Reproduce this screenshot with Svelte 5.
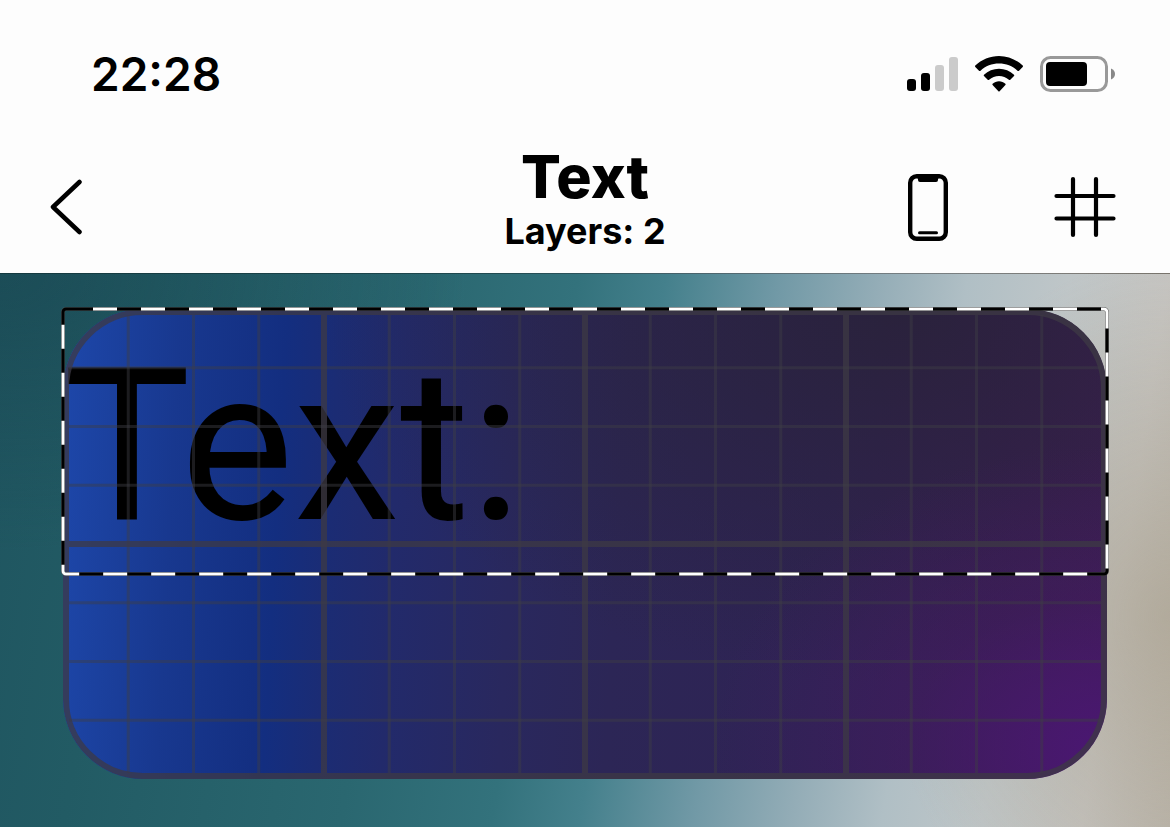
<script>
    let title = 'Text';
    let layers = 2;
    let content = 'Text:';

    // The card is split in 16 columns and 8 rows, every fourth line is thicker
    const cardWidth = 1044;
    const cardHeight = 470;
    const columns = Array.from({ length: 15 }, (_, i) => i + 1);
    const rows = Array.from({ length: 7 }, (_, i) => i + 1);

    let showGrid = true;

    function toggleGrid() {
        showGrid = !showGrid;
    }
</script>

<div class="screen">
    <header>
        <div class="status-bar">
            <time>22:28</time>
            <div class="status-icons">
                <svg width="51" height="34" viewBox="0 0 51 34" aria-hidden="true">
                    <rect x="0" y="22" width="9" height="12" rx="3" />
                    <rect x="14" y="16" width="9" height="18" rx="3" />
                    <rect x="28" y="8" width="9" height="26" rx="3" fill="#cbcbcb" />
                    <rect x="42" y="0" width="9" height="34" rx="3" fill="#cbcbcb" />
                </svg>
                <svg class="wifi" width="48" height="36" viewBox="0 0 48 36" aria-hidden="true">
                    <path d="M24 0C33 0 41.500 3.700 47.700 9.600Q48.300 10.300 47.700 11L44 14.700Q43.300 15.300 42.500 14.700C37.500 10 31 7.500 24 7.500S10.500 10 5.500 14.700Q4.700 15.300 4 14.700L.3 11Q-.3 10.300.3 9.600C6.500 3.700 15 0 24 0Z" />
                    <path d="M24 12.700C29.700 12.700 35 15 39 18.700Q39.700 19.400 39 20.100L35.300 23.800Q34.600 24.400 33.900 23.800C31.200 21.400 27.700 20 24 20S16.800 21.400 14.100 23.800Q13.400 24.400 12.700 23.800L9 20.100Q8.300 19.400 9 18.700C13 15 18.300 12.700 24 12.700Z" />
                    <path d="M24 25.300C26.400 25.300 28.600 26.200 30.400 27.700Q31 28.400 30.400 29.100L24.600 35.200Q24 35.700 23.400 35.200L17.600 29.100Q17 28.400 17.600 27.700C19.400 26.200 21.600 25.300 24 25.300Z" />
                </svg>
                <svg width="75" height="36" viewBox="0 0 75 36" aria-hidden="true">
                    <rect x="1.500" y="1.500" width="65" height="33" rx="9" fill="none" stroke="#999" stroke-width="3" />
                    <rect x="6" y="6" width="41" height="24" rx="4" />
                    <path d="M71 12.500C73.700 13.600 75 15.600 75 18S73.700 22.400 71 23.500Z" fill="#888" />
                </svg>
            </div>
        </div>

        <nav>
            <button class="back" type="button" aria-label="Back">
                <svg width="32" height="56" viewBox="0 0 32 56" aria-hidden="true">
                    <path d="M29.500 3L3 28L29.500 53" fill="none" stroke="#000" stroke-width="4.500" stroke-linecap="round" stroke-linejoin="round" />
                </svg>
            </button>
            <div class="heading">
                <h1>{title}</h1>
                <p>Layers: {layers}</p>
            </div>
            <div class="actions">
                <button type="button" aria-label="Device">
                    <svg width="40" height="67" viewBox="0 0 40 67" aria-hidden="true">
                        <rect x="2.200" y="2.200" width="35.600" height="62.600" rx="6.500" fill="none" stroke="#000" stroke-width="4.400" />
                        <path d="M8 3H32C30 4 30 5 30 6Q30 8 28 8H12Q10 8 10 6C10 5 10 4 8 3Z" />
                        <path d="M11.500 58.800H28.500" stroke="#000" stroke-width="3" stroke-linecap="round" />
                    </svg>
                </button>
                <button type="button" aria-label="Grid" onclick={toggleGrid}>
                    <svg width="62" height="62" viewBox="0 0 62 62" aria-hidden="true">
                        <path d="M19 3V59M42 3V59M2.500 20H59.500M2.500 42.500H59.500" fill="none" stroke="#000" stroke-width="4.200" stroke-linecap="round" />
                    </svg>
                </button>
            </div>
        </nav>
    </header>

    <main>
        <div class="widget">
            <div class="card">
                <p class="layer-text">{content}</p>
                {#if showGrid}
                    <svg class="grid" viewBox="0 0 {cardWidth} {cardHeight}" preserveAspectRatio="none" aria-hidden="true">
                        {#each columns as c}
                            <line x1={c * cardWidth / 16} x2={c * cardWidth / 16} y1="6" y2={cardHeight - 6} class:major={c % 4 === 0} />
                        {/each}
                        {#each rows as r}
                            <line y1={r * cardHeight / 8} y2={r * cardHeight / 8} x1="6" x2={cardWidth - 6} class:major={r % 4 === 0} />
                        {/each}
                    </svg>
                {/if}
            </div>
            <!-- Selection frame of the active layer -->
            <svg class="selection" viewBox="0 0 1044 265" preserveAspectRatio="none" aria-hidden="true">
                <path class="halo" d="M6 0H1041a3 3 0 0 1 3 3V262a3 3 0 0 1-3 3H3a3 3 0 0 1-3-3V3a3 3 0 0 1 3-3H6" />
                <path class="dark" d="M6 0H1041a3 3 0 0 1 3 3V262a3 3 0 0 1-3 3H3a3 3 0 0 1-3-3V3a3 3 0 0 1 3-3H6" />
                <path class="dashes" d="M6 0H1041a3 3 0 0 1 3 3V262a3 3 0 0 1-3 3H3a3 3 0 0 1-3-3V3a3 3 0 0 1 3-3H5" />
            </svg>
        </div>
    </main>
</div>

<style>
    :global(body) {
        margin: 0;
        background: #fdfdfd;
    }

    .screen {
        min-height: 100vh;
        display: flex;
        flex-direction: column;
        font-family: Inter, "Liberation Sans", sans-serif;
        color: #000;
    }

    header {
        background: #fdfdfd;
    }

    .status-bar {
        display: flex;
        justify-content: space-between;
        align-items: center;
        height: 148px;
        padding: 0 55px 0 91px;
    }

    time {
        font-size: 46px;
        font-weight: 600;
        line-height: 56px;
    }

    .status-icons {
        display: flex;
        align-items: center;
        gap: 17px;
    }

    nav {
        display: grid;
        grid-template-columns: 1fr auto 1fr;
        align-items: center;
        height: 118px;
        padding: 0 54px 7px;
    }

    button {
        display: flex;
        padding: 0;
        border: none;
        background: none;
        cursor: pointer;
    }

    .back {
        justify-self: start;
        margin-left: -4px;
    }

    .heading {
        text-align: center;
        margin: -8px 0 8px;
    }

    h1 {
        margin: 0;
        font-size: 59px;
        font-weight: 800;
        line-height: 64px;
    }

    .heading p {
        margin: 0;
        font-size: 36px;
        font-weight: 700;
        line-height: 44px;
    }

    .actions {
        display: flex;
        align-items: center;
        justify-self: end;
        gap: 106px;
    }

    main {
        flex: 1;
        padding: 35px 63px 48px;
        border-top: 1px solid rgba(0, 0, 0, 0.35);
        background:
            radial-gradient(ellipse 25% 65% at 100% 62%, rgba(168, 158, 138, 0.6), rgba(175, 168, 155, 0)),
            radial-gradient(ellipse 40% 50% at 0% 0%, rgba(24, 68, 78, 0.5), rgba(24, 68, 78, 0)),
            linear-gradient(99deg, #1f5560 0%, #225b64 12%, #2a6770 34%, #33727c 46%, #44808c 53%, #7199a6 62%, #94adb7 70%, #b0bfc5 77%, #bfc6c8 85%, #c6c5c2 93%, #bdb8af 100%);
    }

    .widget {
        position: relative;
    }

    .card {
        position: relative;
        aspect-ratio: 1044 / 470;
        overflow: hidden;
        border-radius: 80px;
        background:
            radial-gradient(ellipse 38% 65% at 100% 94%, rgba(76, 22, 118, 0.9), rgba(72, 24, 104, 0.38) 50%, rgba(64, 28, 90, 0)),
            radial-gradient(ellipse 55% 80% at 80% 0%, rgba(40, 34, 54, 0.8), rgba(42, 34, 62, 0)),
            linear-gradient(93deg, #1d46a8 1%, #18388f 11%, #132e80 21%, #1b2c74 26%, #222a6b 32%, #29285e 43%, #2c2656 53%, #2f2354 72%, #381f52 91%, #3d1e54 100%);
    }

    .card::after {
        content: '';
        position: absolute;
        inset: 0;
        border: 6px solid rgba(62, 58, 68, 0.75);
        border-radius: inherit;
    }

    .layer-text {
        margin: 0;
        padding-top: 6px;
        font-family: Roboto, "Liberation Sans", sans-serif;
        font-size: 214px;
        font-weight: 400;
        line-height: 261px;
    }

    .grid {
        position: absolute;
        inset: 0;
        width: 100%;
        height: 100%;
    }

    .grid line {
        stroke: rgba(62, 62, 68, 0.45);
        stroke-width: 3;
    }

    .grid line.major {
        stroke: rgba(62, 58, 68, 0.75);
        stroke-width: 6;
    }

    .selection {
        position: absolute;
        top: 0;
        left: 0;
        width: 100%;
        overflow: visible;
    }

    .selection path {
        fill: none;
        stroke-width: 3;
    }

    .selection .halo {
        stroke: rgba(90, 90, 90, 0.7);
        stroke-width: 4;
    }

    .selection .dark {
        stroke: #000;
    }

    .selection .dashes {
        stroke: #fff;
        stroke-dasharray: 24;
        stroke-dashoffset: 24;
    }
</style>
